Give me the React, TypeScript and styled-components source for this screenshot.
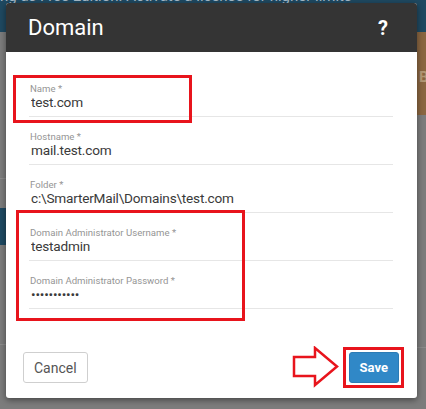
import styled, { createGlobalStyle } from "styled-components";

const GlobalStyle = createGlobalStyle`
  html, body {
    margin: 0;
    padding: 0;
  }
  body {
    width: 426px;
    height: 409px;
    overflow: hidden;
    background: #7c7c7c;
    font-family: Roboto, "Liberation Sans", Arial, sans-serif;
  }
`;

const Page = styled.div`
  position: relative;
  width: 426px;
  height: 409px;
  overflow: hidden;
  background: #7c7c7c;
`;

const Banner = styled.div`
  height: 32px;
  background: #1f4961;
  color: #a7bac8;
  font-size: 15px;
  line-height: 15px;
  white-space: nowrap;
  overflow: hidden;
`;

const BannerText = styled.span`
  display: block;
  margin-top: -11px;
`;

const Content = styled.div`
  display: flex;
  height: 377px;
`;

const SideNav = styled.div`
  width: 100px;
  display: flex;
  flex-direction: column;
`;

const NavItem = styled.div<{ $h: number; $active?: boolean; $line?: boolean }>`
  height: ${(p) => p.$h}px;
  background: ${(p) => (p.$active ? "#1e4962" : "transparent")};
  border-bottom: ${(p) => (p.$line ? "1px solid #8c8c8c" : "0")};
`;

const Main = styled.div`
  flex: 1;
  display: flex;
  flex-direction: column;
  align-items: flex-end;
`;

const StatCard = styled.div`
  width: 70px;
  height: 83px;
  margin-right: -60px;
  box-sizing: border-box;
  padding: 36px 0 0 3px;
  background: #8a6641;
  color: #b39977;
  font-size: 15px;
  font-weight: 700;
  white-space: nowrap;
`;

const TableRow = styled.div`
  align-self: stretch;
  height: 232px;
  border-bottom: 1px solid #8a8a8a;
`;

const Modal = styled.div`
  position: absolute;
  left: 6px;
  top: 3px;
  width: 411px;
  height: 395px;
  background: #fff;
  border-radius: 3px;
  box-shadow: 0 2px 6px rgba(0, 0, 0, 0.45);
  display: flex;
  flex-direction: column;
`;

const Header = styled.div`
  height: 49px;
  flex-shrink: 0;
  background: #343434;
  border-radius: 3px 3px 0 0;
  display: flex;
  align-items: center;
  justify-content: space-between;
  padding: 0 29px 0 22px;
`;

const Title = styled.h2`
  margin: 0;
  color: #fff;
  font-size: 22px;
  font-weight: 400;
`;

const Help = styled.span`
  color: #fff;
  font-size: 20px;
  font-weight: 700;
`;

const Body = styled.div`
  padding: 17px 24px 0 23px;
`;

const Field = styled.div`
  padding: 15px 0 5px;
  border-bottom: 1px solid #e6e6e6;
`;

const Label = styled.label`
  display: block;
  font-size: 9.6px;
  line-height: 10px;
  color: #959595;
  padding-left: 1px;
`;

const Input = styled.input`
  display: block;
  width: 100%;
  height: 17px;
  box-sizing: border-box;
  border: 0;
  padding: 0 0 0 2px;
  margin: 0;
  outline: none;
  background: transparent;
  font-family: Roboto, "Liberation Sans", Arial, sans-serif;
  font-size: 13.6px;
  letter-spacing: -0.2px;
  line-height: 17px;
  color: #3a3a3a;
`;

const Footer = styled.div`
  margin-top: auto;
  display: flex;
  justify-content: space-between;
  align-items: flex-end;
  padding: 0 18px 15px 17px;
`;

const Button = styled.button<{ $primary?: boolean }>`
  height: 31px;
  padding: 0 ${(p) => (p.$primary ? "10px" : "10px")};
  border-radius: 3px;
  font-family: Roboto, "Liberation Sans", Arial, sans-serif;
  font-size: ${(p) => (p.$primary ? "13px" : "14px")};
  font-weight: ${(p) => (p.$primary ? 700 : 400)};
  color: ${(p) => (p.$primary ? "#fff" : "#555")};
  background: ${(p) => (p.$primary ? "#3088c7" : "#fff")};
  border: 1px solid ${(p) => (p.$primary ? "#2b7bb5" : "#cfcfcf")};
  cursor: pointer;
`;

const RedBox = styled.div<{ $x: number; $y: number; $w: number; $h: number }>`
  position: absolute;
  left: ${(p) => p.$x}px;
  top: ${(p) => p.$y}px;
  width: ${(p) => p.$w}px;
  height: ${(p) => p.$h}px;
  box-sizing: border-box;
  border: 3px solid #e8141c;
  pointer-events: none;
`;

const Arrow = styled.svg`
  position: absolute;
  left: 286px;
  top: 343px;
  pointer-events: none;
`;

const fields = [
  { label: "Name *", value: "test.com" },
  { label: "Hostname *", value: "mail.test.com" },
  { label: "Folder *", value: "c:\\SmarterMail\\Domains\\test.com" },
  { label: "Domain Administrator Username *", value: "testadmin" },
  { label: "Domain Administrator Password *", value: "12345678901", password: true },
];

export default function App() {
  return (
    <Page>
      <GlobalStyle />
      <Banner>
        <BannerText>ng as Free Edition. Activate a license for higher limits</BannerText>
      </Banner>
      <Content>
        <SideNav>
          <NavItem $h={146} $line />
          <NavItem $h={29} />
          <NavItem $h={37} $active />
          <NavItem $h={99} $line />
        </SideNav>
        <Main>
          <StatCard>Bl</StatCard>
          <TableRow />
        </Main>
      </Content>

      <Modal>
        <Header>
          <Title>Domain</Title>
          <Help>?</Help>
        </Header>
        <Body>
          {fields.map((f) => (
            <Field key={f.label}>
              <Label>{f.label}</Label>
              <Input
                type={f.password ? "password" : "text"}
                defaultValue={f.value}
                readOnly
              />
            </Field>
          ))}
        </Body>
        <Footer>
          <Button>Cancel</Button>
          <Button $primary>Save</Button>
        </Footer>

        <RedBox $x={7} $y={72} $w={179} $h={48} />
        <RedBox $x={10} $y={207} $w={229} $h={111} />
        <RedBox $x={337} $y={344} $w={61} $h={41} />
        <Arrow width="48" height="42" viewBox="0 0 48 42">
          <path
            d="M2 11 L23 11 L23 2 L45 20.5 L23 39 L23 30 L2 30 Z"
            fill="#fff"
            stroke="#e8141c"
            strokeWidth="2.5"
            strokeLinejoin="miter"
          />
        </Arrow>
      </Modal>
    </Page>
  );
}
